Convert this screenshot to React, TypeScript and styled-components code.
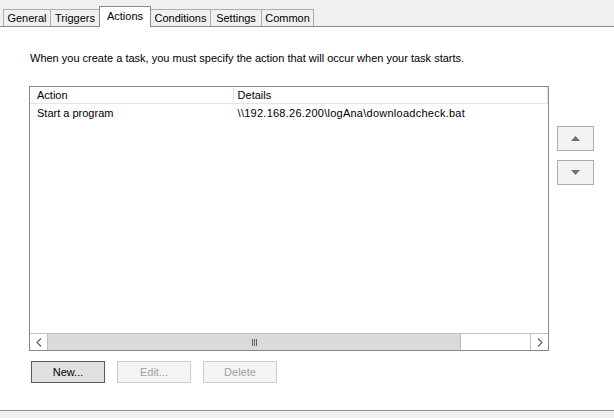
import * as React from 'react'
import styled, { createGlobalStyle } from 'styled-components'

const GlobalStyle = createGlobalStyle`
  html, body {
    margin: 0;
    padding: 0;
    background: #f0f0f0;
  }
  body {
    font-family: Tahoma, "Liberation Sans", Arial, sans-serif;
    font-size: 11px;
    color: #000;
  }
`

const tabs = [
  { label: 'General', width: 47 },
  { label: 'Triggers', width: 49 },
  { label: 'Actions', width: 51 },
  { label: 'Conditions', width: 60 },
  { label: 'Settings', width: 51 },
  { label: 'Common', width: 52 },
]

const App: React.FC = () => {
  return (
    <Window>
      <GlobalStyle />
      <TabStrip>
        {tabs.map((t) => (
          <Tab key={t.label} $active={t.label === 'Actions'} $width={t.width}>
            {t.label}
          </Tab>
        ))}
      </TabStrip>
      <Page>
        <Description>
          When you create a task, you must specify the action that will occur when your task starts.
        </Description>
        <ListRow>
          <ListView>
            <HeaderRow>
              <HeaderCell $width={204} $pad={7}>Action</HeaderCell>
              <HeaderCell $width={315} $pad={4}>Details</HeaderCell>
            </HeaderRow>
            <Rows>
              <Row>
                <Cell $width={204} $pad={7}>Start a program</Cell>
                <Cell $width={315} $pad={4} $spread>\\192.168.26.200\logAna\downloadcheck.bat</Cell>
              </Row>
            </Rows>
            <HScroll>
              <ArrowButton>
                <svg width="6" height="9" viewBox="0 0 6 9">
                  <path d="M5 0.5 L1 4.5 L5 8.5" fill="none" stroke="#606060" strokeWidth="1.2" />
                </svg>
              </ArrowButton>
              <Thumb>
                <Grip>
                  <i />
                  <i />
                  <i />
                </Grip>
              </Thumb>
              <TrackRest />
              <ArrowButton $right>
                <svg width="6" height="9" viewBox="0 0 6 9">
                  <path d="M1 0.5 L5 4.5 L1 8.5" fill="none" stroke="#606060" strokeWidth="1.2" />
                </svg>
              </ArrowButton>
            </HScroll>
          </ListView>
          <SideButtons>
            <MoveButton>
              <svg width="9" height="5" viewBox="0 0 9 5">
                <path d="M0 5 L4.5 0 L9 5 Z" fill="#707070" />
              </svg>
            </MoveButton>
            <MoveButton>
              <svg width="9" height="5" viewBox="0 0 9 5">
                <path d="M0 0 L4.5 5 L9 0 Z" fill="#707070" />
              </svg>
            </MoveButton>
          </SideButtons>
        </ListRow>
        <ButtonRow>
          <PushButton $default>New...</PushButton>
          <PushButton disabled>Edit...</PushButton>
          <PushButton disabled>Delete</PushButton>
        </ButtonRow>
      </Page>
      <Footer />
    </Window>
  )
}

export default App

const Window = styled.div`
  width: 614px;
  height: 418px;
  display: flex;
  flex-direction: column;
  background: #f0f0f0;
  overflow: hidden;
`

const TabStrip = styled.div`
  height: 27px;
  display: flex;
  align-items: flex-end;
  padding-left: 3px;
  border-bottom: 1px solid #898c95;
  box-sizing: border-box;
  position: relative;
  z-index: 1;
`

const Tab = styled.div<{ $active?: boolean; $width: number }>`
  box-sizing: border-box;
  width: ${(p) => p.$width + 1}px;
  height: ${(p) => (p.$active ? 21 : 17)}px;
  margin-left: -1px;
  margin-bottom: ${(p) => (p.$active ? -1 : 0)}px;
  border: 1px solid ${(p) => (p.$active ? '#898c95' : '#adadad')};
  border-bottom: none;
  background: ${(p) => (p.$active ? '#ffffff' : '#f0f0f0')};
  display: flex;
  justify-content: center;
  align-items: flex-start;
  padding-top: ${(p) => (p.$active ? 3 : 2)}px;
  line-height: 13px;
  white-space: nowrap;
  position: relative;
  z-index: ${(p) => (p.$active ? 2 : 1)};
  &:first-child {
    margin-left: 0;
  }
`

const Page = styled.div`
  flex: 1;
  background: #ffffff;
  padding: 25px 0 0 29px;
  display: flex;
  flex-direction: column;
`

const Description = styled.div`
  height: 13px;
  line-height: 13px;
  padding-left: 1px;
  margin-bottom: 21px;
`

const ListRow = styled.div`
  display: flex;
  align-items: flex-start;
`

const ListView = styled.div`
  box-sizing: border-box;
  width: 520px;
  height: 265px;
  border: 1px solid #828790;
  display: flex;
  flex-direction: column;
`

const HeaderRow = styled.div`
  display: flex;
  height: 17px;
  border-bottom: 1px solid #e5e5e5;
  box-sizing: border-box;
`

const HeaderCell = styled.div<{ $width: number; $pad: number }>`
  width: ${(p) => p.$width}px;
  box-sizing: border-box;
  padding-left: ${(p) => p.$pad}px;
  padding-top: 1px;
  line-height: 15px;
  border-right: 1px solid #e5e5e5;
  white-space: nowrap;
  overflow: hidden;
`

const Rows = styled.div`
  flex: 1;
  padding-top: 0;
`

const Row = styled.div`
  display: flex;
  height: 17px;
  align-items: center;
`

const Cell = styled.div<{ $width: number; $pad: number; $spread?: boolean }>`
  width: ${(p) => p.$width}px;
  box-sizing: border-box;
  padding-left: ${(p) => p.$pad}px;
  letter-spacing: ${(p) => (p.$spread ? '0.25px' : 'normal')};
  white-space: nowrap;
  overflow: hidden;
`

const HScroll = styled.div`
  height: 17px;
  display: flex;
  background: #f0f0f0;
  border-top: 1px solid #c0c0c0;
  box-sizing: border-box;
`

const ArrowButton = styled.div<{ $right?: boolean }>`
  width: 18px;
  box-sizing: border-box;
  background: #ffffff;
  display: flex;
  align-items: center;
  justify-content: center;
  border-${(p) => (p.$right ? 'left' : 'right')}: 1px solid #c0c0c0;
`

const Thumb = styled.div`
  width: 413px;
  background: #dadada;
  border-right: 1px solid #bcbcbc;
  box-sizing: border-box;
  display: flex;
  align-items: center;
  justify-content: center;
`

const Grip = styled.div`
  display: flex;
  gap: 1px;
  i {
    display: block;
    width: 1px;
    height: 7px;
    background: #606060;
  }
`

const TrackRest = styled.div`
  flex: 1;
  background: #ffffff;
`

const SideButtons = styled.div`
  display: flex;
  flex-direction: column;
  gap: 9px;
  margin-left: 8px;
  margin-top: 40px;
`

const MoveButton = styled.button`
  width: 37px;
  height: 25px;
  padding: 0;
  box-sizing: border-box;
  border: 1px solid #adadad;
  background: #f3f3f3;
  display: flex;
  align-items: center;
  justify-content: center;
`

const ButtonRow = styled.div`
  display: flex;
  gap: 12px;
  margin-top: 10px;
  padding-left: 2px;
`

const PushButton = styled.button<{ $default?: boolean }>`
  width: 74px;
  height: 22px;
  box-sizing: border-box;
  font-family: inherit;
  font-size: 11px;
  padding: 0;
  color: #000;
  background: #e1e1e1;
  border: 1px solid ${(p) => (p.$default ? '#5a5a5a' : '#adadad')};
  &:disabled {
    color: #a0a0a0;
    background: #f4f4f4;
    border-color: #cccccc;
  }
`

const Footer = styled.div`
  height: 7px;
  border-top: 1px solid #8e8f8f;
  background: #f0f0f0;
`
